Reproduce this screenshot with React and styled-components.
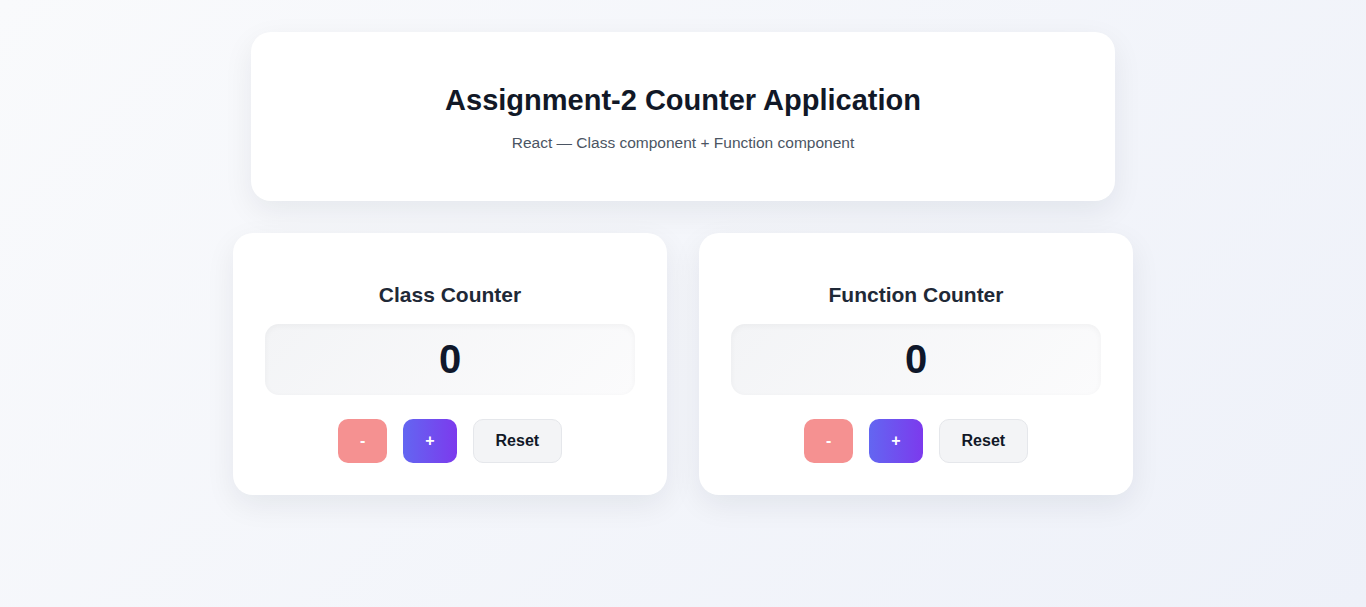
import React, { useState } from "react";
import styled, { createGlobalStyle } from "styled-components";

const Global = createGlobalStyle`
  html, body { margin: 0; padding: 0; }
  body {
    font-family: "Liberation Sans", Arial, sans-serif;
    background: linear-gradient(135deg, #f9fafc 0%, #eef1f9 100%);
    min-height: 100vh;
  }
  * { box-sizing: border-box; }
`;

const Page = styled.div`
  min-height: 607px;
  padding: 32px 0;
  display: flex;
  flex-direction: column;
  align-items: center;
  gap: 32px;
`;

const Header = styled.header`
  width: 864px;
  background: #fff;
  border-radius: 20px;
  padding: 32px;
  text-align: center;
  box-shadow: 0 10px 30px rgba(15, 23, 42, 0.07);
`;

const Title = styled.h1`
  margin: 19px 0 17px;
  font-size: 29px;
  line-height: 34px;
  font-weight: 700;
  color: #111827;
`;

const Subtitle = styled.p`
  margin: 0 0 17px;
  font-size: 15.5px;
  line-height: 18px;
  color: #4b5563;
`;

const Grid = styled.div`
  width: 900px;
  display: grid;
  grid-template-columns: 1fr 1fr;
  gap: 32px;
`;

const Card = styled.section`
  background: #fff;
  border-radius: 20px;
  padding: 32px;
  box-shadow: 0 10px 30px rgba(15, 23, 42, 0.07);
  display: flex;
  flex-direction: column;
  align-items: stretch;
`;

const CardTitle = styled.h2`
  margin: 18px 0 17px;
  font-size: 21px;
  line-height: 24px;
  font-weight: 700;
  color: #1f2937;
  text-align: center;
`;

const Display = styled.div`
  height: 71px;
  border-radius: 14px;
  background: linear-gradient(135deg, #f3f4f6 0%, #fbfbfc 100%);
  box-shadow: inset 0 2px 6px rgba(0, 0, 0, 0.04);
  display: flex;
  align-items: center;
  justify-content: center;
  font-size: 40px;
  font-weight: 700;
  color: #0f172a;
`;

const Buttons = styled.div`
  margin-top: 24px;
  display: flex;
  justify-content: center;
  gap: 16px;
`;

const variants = {
  dec: "background: #f59191; color: #fff; border: none;",
  inc: "background: linear-gradient(90deg, #6366f1 0%, #7c3aed 100%); color: #fff; border: none;",
  reset: "background: #f3f4f6; color: #111827; border: 1px solid #e5e7eb;",
};

const Button = styled.button`
  height: 44px;
  padding: 0 22px;
  border-radius: 10px;
  font-family: "Liberation Sans", Arial, sans-serif;
  font-size: 16px;
  font-weight: 700;
  cursor: pointer;
  ${(p) => variants[p.$variant]}
`;

function Counter({ title }) {
  const [count, setCount] = useState(0);
  return (
    <Card>
      <CardTitle>{title}</CardTitle>
      <Display>{count}</Display>
      <Buttons>
        <Button $variant="dec" onClick={() => setCount((c) => Math.max(0, c - 1))}>-</Button>
        <Button $variant="inc" onClick={() => setCount((c) => c + 1)}>+</Button>
        <Button $variant="reset" onClick={() => setCount(0)}>Reset</Button>
      </Buttons>
    </Card>
  );
}

export default function App() {
  return (
    <>
      <Global />
      <Page>
        <Header>
          <Title>Assignment-2 Counter Application</Title>
          <Subtitle>React — Class component + Function component</Subtitle>
        </Header>
        <Grid>
          <Counter title="Class Counter" />
          <Counter title="Function Counter" />
        </Grid>
      </Page>
    </>
  );
}
